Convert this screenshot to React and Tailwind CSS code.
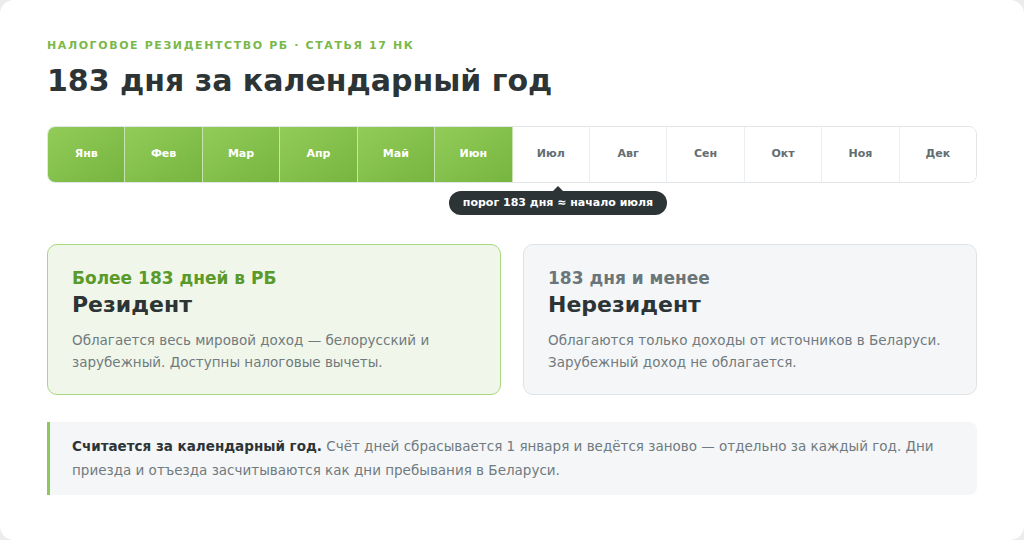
import React from "react";

const months = ["Янв", "Фев", "Мар", "Апр", "Май", "Июн", "Июл", "Авг", "Сен", "Окт", "Ноя", "Дек"];

export default function App() {
  return (
    <div className="w-[1024px] h-[540px] bg-[#ececec] font-[DejaVu_Sans]">
      <div className="w-full h-full bg-white rounded-[14px] px-[47px] pt-[37px]">
        <p className="text-[11px] leading-[18px] font-bold tracking-[1.6px] text-[#7ab84a]">
          НАЛОГОВОЕ РЕЗИДЕНТСТВО РБ · СТАТЬЯ 17 НК
        </p>
        <h1 className="mt-[6px] text-[30px] leading-[40px] font-bold text-[#2d3436]">
          183 дня за календарный год
        </h1>
        <div className="mt-[25px] flex h-[57px] rounded-[8px] border border-[#e3e6e8] overflow-hidden">
          {months.map((m, i) =>
            i < 6 ? (
              <div
                key={m}
                className="flex-1 flex items-center justify-center bg-gradient-to-br from-[#92cc58] to-[#76b53f] text-white text-[11px] font-bold border-r border-[#c9e3b0]"
              >
                {m}
              </div>
            ) : (
              <div
                key={m}
                className={"flex-1 flex items-center justify-center bg-white text-[#636e72] text-[11px] font-bold" + (i < 11 ? " border-r border-[#eceff1]" : "")}
              >
                {m}
              </div>
            )
          )}
        </div>
        <div className="flex justify-center pl-[92px] mt-[3px] h-[30px]">
          <div className="relative">
            <div className="absolute left-1/2 -top-[0px] -ml-[5px] w-0 h-0 border-l-[5px] border-r-[5px] border-b-[5px] border-l-transparent border-r-transparent border-b-[#2d3436]"></div>
            <div className="mt-[5px] bg-[#2d3436] text-white text-[11px] font-bold rounded-full px-[14px] h-[24px] flex items-center">
              порог 183 дня ≈ начало июля
            </div>
          </div>
        </div>
        <div className="mt-[28px] grid grid-cols-2 gap-[22px]">
          <div className="h-[151px] rounded-[10px] border border-[#a8d77e] bg-[#f0f6e9] px-[24px] pt-[22px]">
            <p className="text-[17px] font-bold text-[#5a9a2a] leading-[22px]">Более 183 дней в РБ</p>
            <p className="text-[22px] font-bold text-[#2d3436] leading-[30px] mt-[1px]">Резидент</p>
            <p className="mt-[9px] text-[13.5px] leading-[22px] text-[#707b7f]">
              Облагается весь мировой доход — белорусский и зарубежный. Доступны налоговые вычеты.
            </p>
          </div>
          <div className="h-[151px] rounded-[10px] border border-[#e0e3e6] bg-[#f5f6f8] px-[24px] pt-[22px]">
            <p className="text-[17px] font-bold text-[#6b767a] leading-[22px]">183 дня и менее</p>
            <p className="text-[22px] font-bold text-[#2d3436] leading-[30px] mt-[1px]">Нерезидент</p>
            <p className="mt-[9px] text-[13.5px] leading-[22px] text-[#707b7f]">
              Облагаются только доходы от источников в Беларуси. Зарубежный доход не облагается.
            </p>
          </div>
        </div>
        <div className="mt-[27px] h-[73px] rounded-r-[8px] border-l-[3px] border-[#8cc85a] bg-[#f5f6f8] pl-[22px] pr-[16px] pt-[12px] text-[13.5px] leading-[24px] text-[#707b7f]">
          <span className="font-bold text-[#2d3436]">Считается за календарный год.</span> Счёт дней сбрасывается 1 января и ведётся заново — отдельно за каждый год. Дни приезда и отъезда засчитываются как дни пребывания в Беларуси.
        </div>
      </div>
    </div>
  );
}
